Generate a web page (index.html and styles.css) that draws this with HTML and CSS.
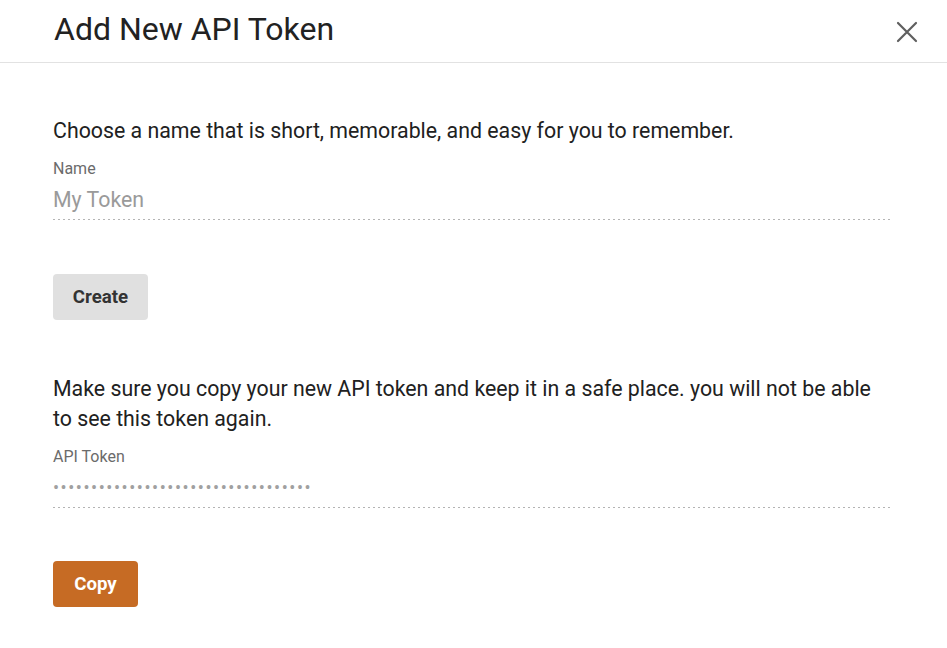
FILE: index.html
```html
<!DOCTYPE html>
<html>
<head>
<meta charset="utf-8">
<link rel="stylesheet" href="styles.css">
</head>
<body>
<div class="dialog">
  <header class="dialog-header">
    <h1 class="dialog-title">Add New API Token</h1>
    <button class="close-btn" aria-label="Close">
      <svg width="24" height="24" viewBox="0 0 24 24"><path d="M3 3 L21 21 M21 3 L3 21" stroke="#5f5f5f" stroke-width="2.2" stroke-linecap="round"/></svg>
    </button>
  </header>
  <main class="dialog-body">
    <p class="intro">Choose a name that is short, memorable, and easy for you to remember.</p>
    <div class="field">
      <label class="field-label">Name</label>
      <div class="field-input placeholder">My Token</div>
    </div>
    <button class="btn btn-grey">Create</button>
    <p class="intro second">Make sure you copy your new API token and keep it in a safe place. you will not be able to see this token again.</p>
    <div class="field">
      <label class="field-label">API Token</label>
      <div class="field-input dots">••••••••••••••••••••••••••••••••••</div>
    </div>
    <button class="btn btn-orange">Copy</button>
  </main>
</div>
</body>
</html>
```
FILE: styles.css
```css
* { box-sizing: border-box; }
html, body { margin: 0; padding: 0; background: #fff; }
body { font-family: Roboto, "Liberation Sans", sans-serif; color: #212121; }

.dialog { width: 947px; }

.dialog-header {
  height: 63px;
  border-bottom: 1px solid #e2e2e2;
  display: flex;
  align-items: center;
  justify-content: space-between;
  padding: 0 28px 4px 54px;
}
.dialog-title {
  margin: 0;
  font-size: 32px;
  line-height: 38px;
  font-weight: 400;
  color: #222;
}
.close-btn {
  background: none;
  border: 0;
  padding: 0;
  width: 24px;
  height: 24px;
  display: flex;
  cursor: pointer;
  margin-top: 6px;
}

.dialog-body {
  padding: 53px 56px 0 53px;
  display: flex;
  flex-direction: column;
  align-items: flex-start;
}
.intro {
  margin: 0;
  font-size: 21.33px;
  line-height: 30px;
  color: #212121;
}
.intro.second { margin-top: 54px; }

.field {
  width: 100%;
  margin-top: 14px;
  display: flex;
  flex-direction: column;
}
.field-label {
  font-size: 16px;
  line-height: 18px;
  color: #6b6b6b;
}
.field-input {
  height: 42px;
  padding-top: 10px;
  line-height: 24px;
  background-image: repeating-linear-gradient(to right, #b4b4b4 0 2px, transparent 2px 5px);
  background-size: 100% 1px;
  background-repeat: no-repeat;
  background-position: bottom left;
}
.placeholder { font-size: 21.33px; color: #9a9a9a; }
.dots { font-size: 18px; color: #a0a0a0; letter-spacing: 1.55px; }

.btn {
  border: 0;
  border-radius: 4px;
  height: 46px;
  font-family: Roboto, "Liberation Sans", sans-serif;
  font-size: 18.67px;
  font-weight: 700;
  padding: 0;
  cursor: pointer;
  margin-top: 54px;
}
.btn-grey { background: #e0e0e0; color: #333; width: 95px; }
.btn-orange { background: #c66b24; color: #fff; width: 85px; margin-top: 53px; }
```
